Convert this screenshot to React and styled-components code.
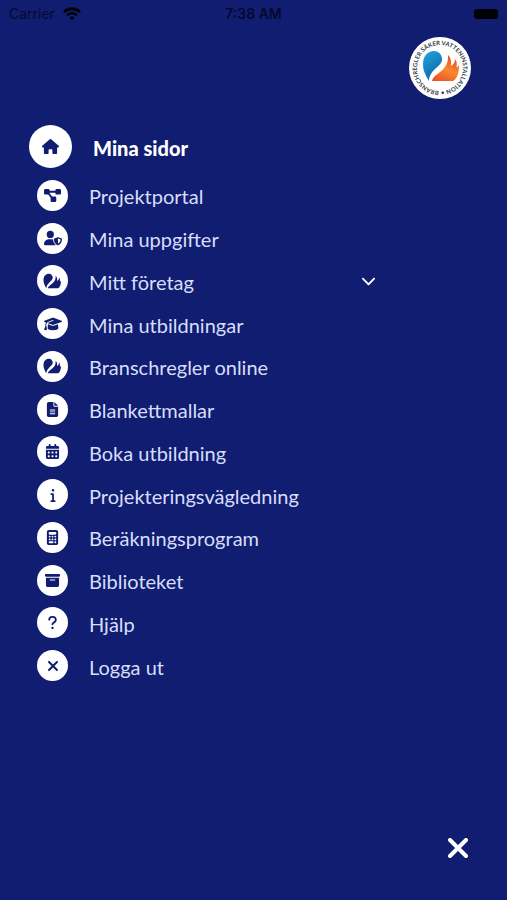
import React from "react";
import styled, { createGlobalStyle } from "styled-components";
import {
  FaHouse, FaDiagramProject, FaUserShield, FaGraduationCap, FaFileLines,
  FaCalendarDays, FaInfo, FaCalculator, FaBoxArchive, FaQuestion, FaXmark,
  FaChevronDown,
} from "react-icons/fa6";

const navy = "#101d71";

const GlobalStyle = createGlobalStyle`
  *, *::before, *::after { box-sizing: border-box; }
  body { margin: 0; background: ${navy}; font-family: Lato, "Open Sans", sans-serif; }
  button { border: 0; padding: 0; background: none; font: inherit; color: inherit; cursor: pointer; }
`;

const Screen = styled.div`
  min-height: 100vh;
  display: flex;
  flex-direction: column;
  background: ${navy};
  color: #fff;
`;

const StatusBar = styled.header`
  display: grid;
  grid-template-columns: 1fr auto 1fr;
  align-items: center;
  height: 27px;
  padding: 0 9px;
  color: #050a2c;
  font: 400 14px/20px Inter, sans-serif;
`;

const Carrier = styled.div`
  display: flex;
  align-items: center;
  gap: 8px;
`;

const Clock = styled.time`
  font-size: 14px;
  font-weight: 600;
`;

const Battery = styled.div`
  justify-self: end;
  width: 24px;
  height: 10px;
  border-radius: 3px;
  background: #000005;
`;

const LogoRow = styled.div`
  display: flex;
  justify-content: flex-end;
  height: 98px;
  padding: 10px 36px 0 0;
`;

const LogoLink = styled.a`
  width: 62px;
  height: 62px;
`;

const Menu = styled.nav`
  flex: 1;
  padding-right: 130px;
`;

const MenuLink = styled.a`
  display: flex;
  align-items: center;
  color: ${(p) => (p.$main ? "#fff" : "#d8defa")};
  text-decoration: none;
  font-size: 20px;
  line-height: 28px;
  font-weight: ${(p) => (p.$main ? 900 : 400)};
  gap: 21px;
  padding-left: ${(p) => (p.$main ? 29 : 37)}px;
`;

const Label = styled.span`
  flex: 1;
  padding-top: 2px;
`;

const Disc = styled.span`
  display: grid;
  place-items: center;
  flex: none;
  width: ${(p) => (p.$main ? 43 : 31)}px;
  height: ${(p) => (p.$main ? 43 : 31)}px;
  border-radius: 50%;
  background: #fff;
  color: ${navy};
  font-size: ${(p) => p.$size || 15}px;
`;

const List = styled.ul`
  display: grid;
  grid-template-rows: repeat(12, 1fr);
  height: 513px;
  margin: 6px 0 0;
  padding: 0;
  list-style: none;
`;

const Item = styled.li`
  display: flex;
  align-items: center;

  & > a { flex: 1; }
`;

const Expand = styled.button`
  display: grid;
  place-items: center;
  width: 18px;
  height: 24px;
  font-size: 15px;
`;

const Footer = styled.footer`
  display: flex;
  justify-content: flex-end;
  padding: 0 33px 36px;
`;

const CloseButton = styled.button`
  display: grid;
  place-items: center;
  width: 32px;
  height: 32px;
`;

const dropPath = "M20 44 C17 39 14 34 14 27 C14 19 19 14 25 14 C30 14 33 18 33 22 C33 27 29 29 26 32 C22 36 20 39 20 44Z";
const flamePath = "M23 44 C24 38 32 36 35 31 C39 27 39 22 39 18 C43 22 42 26 42 29 C45 27 46 25 46 22 C49 26 47 29 48 31 L50 28 C50 36 48 42 44 44Z";

function WifiIcon() {
  return (
    <svg width="18" height="14" viewBox="0 0 18 14" fill="none" stroke="#000005" strokeWidth="3" aria-hidden="true">
      <path d="M1 5 C5.500 0.500 12.500 0.500 17 5" />
      <path d="M4 8.500 C7 5.500 11 5.500 14 8.500" strokeWidth="2.400" />
      <path d="M6.500 10.500 Q9 8.500 11.500 10.500 L9 13.500Z" fill="#000005" stroke="none" />
    </svg>
  );
}

function Logo() {
  return (
    <svg width="62" height="62" viewBox="0 0 62 62" role="img" aria-label="Branschregler Säker Vatteninstallation">
      <defs>
        <path id="ring" d="M31 54 A23 23 0 0 1 31 8 A23 23 0 0 1 31 54" />
        <linearGradient id="water" x1="0" y1="0" x2="0.5" y2="1">
          <stop offset="0" stopColor="#25a7dc" />
          <stop offset="1" stopColor="#0867ae" />
        </linearGradient>
        <linearGradient id="fire" x1="0.2" y1="1" x2="0.7" y2="0">
          <stop offset="0" stopColor="#e9532a" />
          <stop offset="0.5" stopColor="#f9882c" />
          <stop offset="1" stopColor="#e64a25" />
        </linearGradient>
      </defs>
      <circle cx="31" cy="31" r="31" fill="#fff" />
      <path d={dropPath} fill="url(#water)" />
      <path d={flamePath} fill="url(#fire)" />
      <text fill="#343a48" fontFamily="Lato, sans-serif" fontSize="6" fontWeight="700">
        <textPath href="#ring" startOffset="1">BRANSCHREGLER SÄKER VATTENINSTALLATION •</textPath>
      </text>
    </svg>
  );
}

function DropFlame() {
  return (
    <svg width="19" height="16" viewBox="13 13 39 32" aria-hidden="true" fill="currentColor">
      <path d={dropPath} />
      <path d={flamePath} />
    </svg>
  );
}

const items = [
  { label: "Projektportal", Icon: FaDiagramProject, size: 17 },
  { label: "Mina uppgifter", Icon: FaUserShield, size: 18 },
  { label: "Mitt företag", Icon: DropFlame, expandable: true },
  { label: "Mina utbildningar", Icon: FaGraduationCap, size: 18 },
  { label: "Branschregler online", Icon: DropFlame },
  { label: "Blankettmallar", Icon: FaFileLines, size: 15 },
  { label: "Boka utbildning", Icon: FaCalendarDays, size: 15 },
  { label: "Projekteringsvägledning", Icon: FaInfo, size: 14 },
  { label: "Beräkningsprogram", Icon: FaCalculator, size: 15 },
  { label: "Biblioteket", Icon: FaBoxArchive, size: 15 },
  { label: "Hjälp", Icon: FaQuestion, size: 15 },
  { label: "Logga ut", Icon: FaXmark, size: 16 },
];

export default function App() {
  return (
    <Screen>
      <GlobalStyle />
      <StatusBar>
        <Carrier>Carrier <WifiIcon /></Carrier>
        <Clock>7:38 AM</Clock>
        <Battery />
      </StatusBar>
      <LogoRow>
        <LogoLink href="#start"><Logo /></LogoLink>
      </LogoRow>
      <Menu>
        <MenuLink href="#mina-sidor" $main>
          <Disc $main $size={17}><FaHouse /></Disc>
          <Label>Mina sidor</Label>
        </MenuLink>
        <List>
          {items.map(({ label, Icon, size, expandable }) => (
            <Item key={label}>
              <MenuLink href="#">
                <Disc $size={size}><Icon /></Disc>
                <Label>{label}</Label>
              </MenuLink>
              {expandable && (
                <Expand type="button" aria-label="Visa Mitt företag"><FaChevronDown /></Expand>
              )}
            </Item>
          ))}
        </List>
      </Menu>
      <Footer>
        <CloseButton type="button" aria-label="Stäng">
          <svg width="20" height="20" viewBox="0 0 20 20" stroke="#fff" strokeWidth="4" strokeLinecap="round">
            <path d="M2 2 L18 18 M18 2 L2 18" />
          </svg>
        </CloseButton>
      </Footer>
    </Screen>
  );
}
